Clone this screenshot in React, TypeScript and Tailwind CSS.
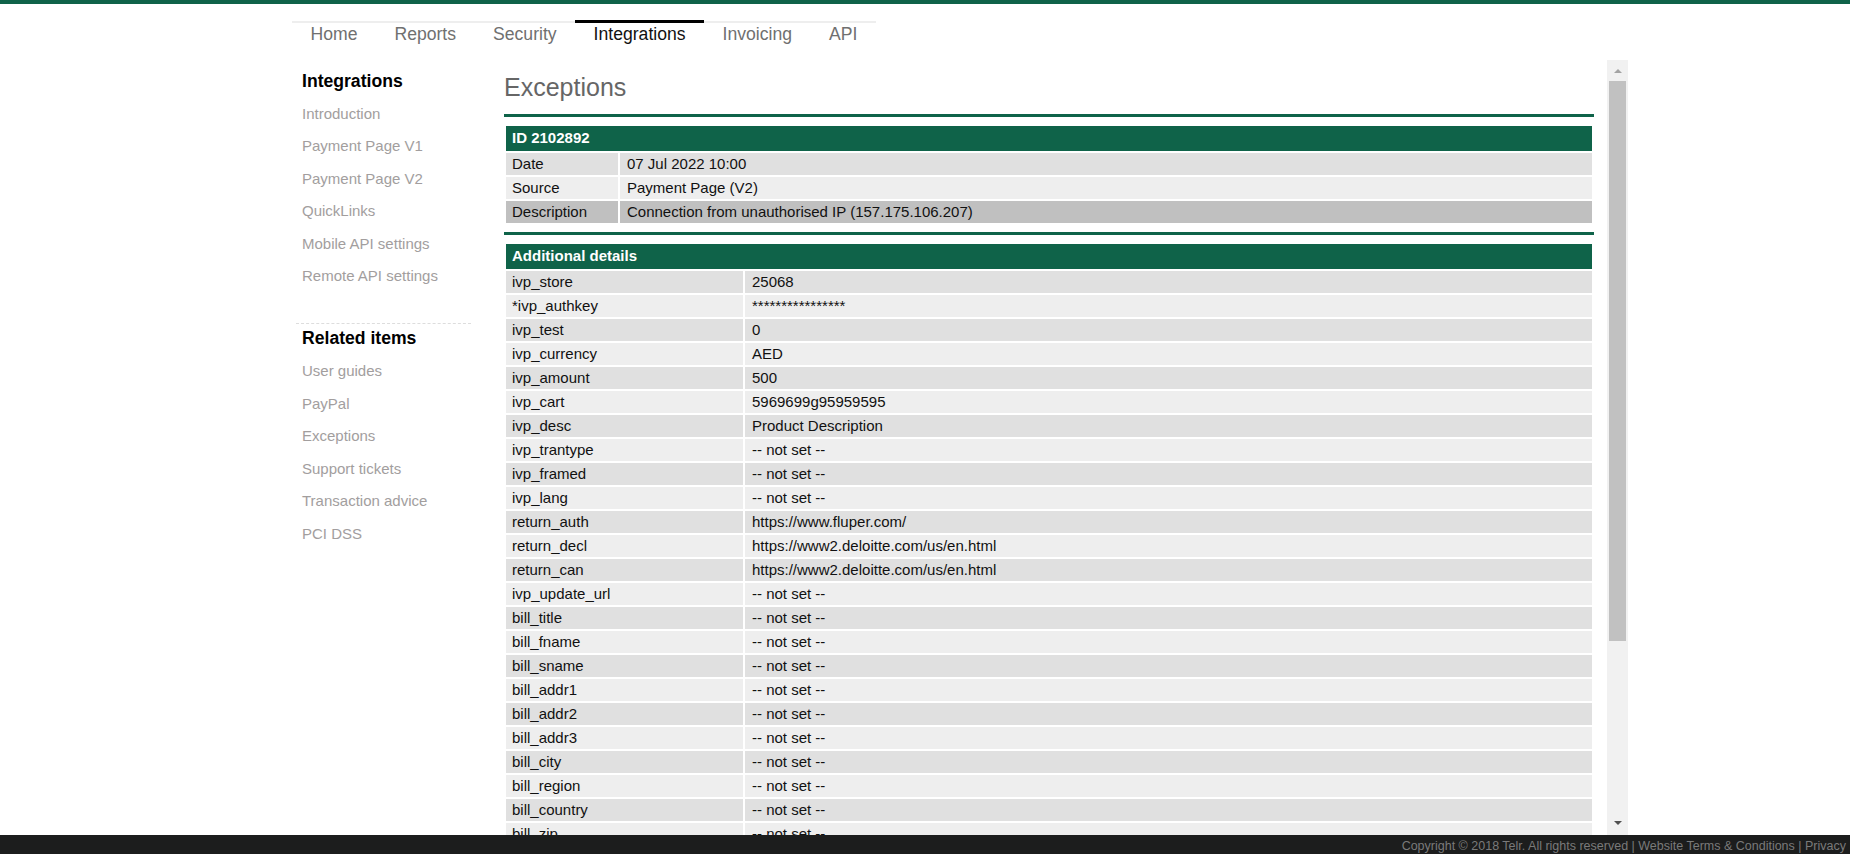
import React from 'react';

const tabs = ['Home', 'Reports', 'Security', 'Integrations', 'Invoicing', 'API'];

const integrationLinks = [
  'Introduction',
  'Payment Page V1',
  'Payment Page V2',
  'QuickLinks',
  'Mobile API settings',
  'Remote API settings',
];

const relatedLinks = ['User guides', 'PayPal', 'Exceptions', 'Support tickets', 'Transaction advice', 'PCI DSS'];

const NOT_SET = '-- not set --';

const exceptionRows = [
  { label: 'Date', value: '07 Jul 2022 10:00', bg: 'bg-[#e0e0e0]' },
  { label: 'Source', value: 'Payment Page (V2)', bg: 'bg-[#eeeeee]' },
  { label: 'Description', value: 'Connection from unauthorised IP (157.175.106.207)', bg: 'bg-[#c0c0c0]' },
];

const detailRows: [string, string][] = [
  ['ivp_store', '25068'],
  ['*ivp_authkey', '****************'],
  ['ivp_test', '0'],
  ['ivp_currency', 'AED'],
  ['ivp_amount', '500'],
  ['ivp_cart', '5969699g95959595'],
  ['ivp_desc', 'Product Description'],
  ['ivp_trantype', NOT_SET],
  ['ivp_framed', NOT_SET],
  ['ivp_lang', NOT_SET],
  ['return_auth', 'https://www.fluper.com/'],
  ['return_decl', 'https://www2.deloitte.com/us/en.html'],
  ['return_can', 'https://www2.deloitte.com/us/en.html'],
  ['ivp_update_url', NOT_SET],
  ['bill_title', NOT_SET],
  ['bill_fname', NOT_SET],
  ['bill_sname', NOT_SET],
  ['bill_addr1', NOT_SET],
  ['bill_addr2', NOT_SET],
  ['bill_addr3', NOT_SET],
  ['bill_city', NOT_SET],
  ['bill_region', NOT_SET],
  ['bill_country', NOT_SET],
  ['bill_zip', NOT_SET],
  ['bill_email', NOT_SET],
  ['bill_phone1', NOT_SET],
];

function SectionHeader({ title }: { title: string }) {
  return (
    <div className="h-[25px] bg-[#0f6349] px-[6px] flex items-center text-[15px] font-bold text-white">
      {title}
    </div>
  );
}

export default function App() {
  return (
    <div className="h-screen flex flex-col bg-white overflow-hidden font-['Liberation_Sans',Arial,sans-serif]">
      {/* top green strip */}
      <div className="h-[4px] bg-[#0f6349] shrink-0" />

      {/* Main nav */}
      <div className="h-[56px] shrink-0 pt-[17px] pl-[292px]">
        <ul className="inline-flex items-start border-t-2 border-[#eeeeee]">
          {tabs.map((tab) => (
            <li
              key={tab}
              className={
                tab === 'Integrations'
                  ? '-mt-[3px] border-t-[3px] border-black px-[18.5px] pt-[1px] text-[17.6px] leading-[20px] text-[#111111]'
                  : 'px-[18.5px] pt-[1px] text-[17.6px] leading-[20px] text-[#707070]'
              }
            >
              {tab}
            </li>
          ))}
        </ul>
      </div>

      {/* Body */}
      <div className="flex-1 min-h-0 flex pl-[290px]">
        {/* Sidebar */}
        <div className="w-[214px] shrink-0 pt-[4.5px]">
          <div className="w-[175px] ml-[6px]">
            <div className="h-[33px] flex items-center pl-[6px] text-[17.6px] font-bold text-black">Integrations</div>
            {integrationLinks.map((link) => (
              <div key={link} className="h-[32.5px] flex items-center pl-[6px] text-[15px] text-[#a29e9e]">
                {link}
              </div>
            ))}
            <div className="mt-[30.5px] border-t border-dashed border-[#dddddd]" />
            <div className="h-[31px] pb-[3px] flex items-center pl-[6px] text-[17.6px] font-bold text-black">Related items</div>
            {relatedLinks.map((link) => (
              <div key={link} className="h-[32.5px] flex items-center pl-[6px] text-[15px] text-[#a29e9e]">
                {link}
              </div>
            ))}
          </div>
        </div>

        {/* Content */}
        <div className="w-[1090px] shrink-0 overflow-hidden">
          <h1 className="pt-[13px] text-[25px] leading-[28px] font-normal text-[#666666]">Exceptions</h1>

          <div className="mt-[13px] h-[3px] bg-[#0f6349]" />
          <div className="mt-[7px] p-[2px] flex flex-col gap-[2px] text-[15px] text-[#111111]">
            <SectionHeader title="ID 2102892" />
            {exceptionRows.map((row) => (
              <div key={row.label} className="flex gap-[2px]">
                <div className={`w-[112px] shrink-0 h-[22px] flex items-center px-[6px] ${row.bg}`}>{row.label}</div>
                <div className={`flex-1 h-[22px] flex items-center px-[7px] ${row.bg}`}>{row.value}</div>
              </div>
            ))}
          </div>

          <div className="mt-[7px] h-[3px] bg-[#0f6349]" />
          <div className="mt-[7px] p-[2px] flex flex-col gap-[2px] text-[15px] text-[#111111]">
            <SectionHeader title="Additional details" />
            {detailRows.map(([label, value], i) => {
              const bg = i % 2 === 0 ? 'bg-[#e0e0e0]' : 'bg-[#eeeeee]';
              return (
                <div key={label} className="flex gap-[2px]">
                  <div className={`w-[237px] shrink-0 h-[22px] flex items-center px-[6px] ${bg}`}>{label}</div>
                  <div className={`flex-1 h-[22px] flex items-center px-[7px] ${bg}`}>{value}</div>
                </div>
              );
            })}
          </div>
        </div>

        {/* Scrollbar */}
        <div className="ml-[13px] w-[21px] shrink-0 bg-[#f1f1f1] flex flex-col">
          <div className="h-[21px] flex items-center justify-center">
            <div className="w-0 h-0 border-l-[4px] border-r-[4px] border-b-[4px] border-l-transparent border-r-transparent border-b-[#a3a3a3]" />
          </div>
          <div className="mx-[2px] h-[560px] bg-[#c1c1c1]" />
          <div className="flex-1" />
          <div className="h-[24px] flex items-center justify-center">
            <div className="w-0 h-0 border-l-[4px] border-r-[4px] border-t-[4px] border-l-transparent border-r-transparent border-t-[#505050]" />
          </div>
        </div>
      </div>

      {/* Footer */}
      <div className="h-[19px] shrink-0 bg-[#1c1d1d] flex justify-end pr-[4px] pt-[4px] overflow-hidden">
        <span className="whitespace-nowrap text-[12.5px] leading-[14px] text-[#7a7a7a]">
          Copyright © 2018 Telr. All rights reserved | Website Terms &amp; Conditions | Privacy
        </span>
      </div>
    </div>
  );
}
